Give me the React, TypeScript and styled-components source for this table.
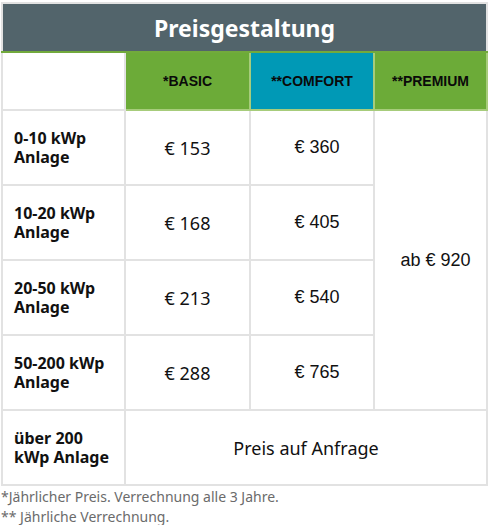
import React from "react";
import styled, { createGlobalStyle } from "styled-components";

const GlobalStyle = createGlobalStyle`
    body {
        margin: 0;
        background: #ffffff;
        font-family: "Noto Sans", "Open Sans", sans-serif;
        color: #111;
    }
`;

const StyledPricing = styled.div`
    padding: 2px 4px 0 1px;
    width: 485px;
`;

const Table = styled.table`
    width: 485px;
    border-collapse: collapse;
    table-layout: fixed;
    border: 2px solid #e2e2e2;
`;

const TitleCell = styled.th`
    height: 47px;
    background: #52646b;
    color: #fff;
    font-size: 23px;
    font-weight: 700;
    text-align: center;
    border-bottom: 2px solid #72aa3c;
    padding: 0;
`;

const HeadCell = styled.th<{ $bg?: string }>`
    height: 56px;
    background: ${(p) => p.$bg || "#fff"};
    border: 2px solid ${(p) => (p.$bg ? "#a7cc7b" : "#e2e2e2")};
    border-top: none;
    font-family: "Liberation Sans", Arial, sans-serif;
    font-size: 14px;
    font-weight: 700;
    color: #0a0a0a;
    text-align: center;
    padding: 0;
`;

const LabelCell = styled.td`
    height: 73px;
    border: 2px solid #e2e2e2;
    padding: 0 8px 0 11px;
    font-size: 16px;
    font-weight: 700;
    line-height: 19px;
    vertical-align: middle;
`;

const PriceCell = styled.td<{ $alt?: boolean }>`
    border: 2px solid #e2e2e2;
    font-family: ${(p) =>
        p.$alt ? `"Liberation Sans", Arial, sans-serif` : `"Noto Sans", sans-serif`};
    font-size: 18px;
    text-align: center;
    vertical-align: middle;
    padding: 0 0 ${(p) => (p.$alt ? "0 10px" : "0")};
`;

const Footnote = styled.p`
    margin: 0;
    font-size: 14px;
    line-height: 20px;
    color: #6b6b6b;
`;

const Footnotes = styled.div`
    padding-top: 1px;
`;

const rows = [
    { label: ["0-10 kWp", "Anlage"], basic: "€ 153", comfort: "€ 360" },
    { label: ["10-20 kWp", "Anlage"], basic: "€ 168", comfort: "€ 405" },
    { label: ["20-50 kWp", "Anlage"], basic: "€ 213", comfort: "€ 540" },
    { label: ["50-200 kWp", "Anlage"], basic: "€ 288", comfort: "€ 765" },
];

export default function App() {
    return (
        <StyledPricing>
            <GlobalStyle />
            <Table>
                <colgroup>
                    <col style={{ width: 123 }} />
                    <col style={{ width: 125 }} />
                    <col style={{ width: 124 }} />
                    <col style={{ width: 113 }} />
                </colgroup>
                <thead>
                    <tr>
                        <TitleCell colSpan={4}>Preisgestaltung</TitleCell>
                    </tr>
                    <tr>
                        <HeadCell />
                        <HeadCell $bg="#6cab38">*BASIC</HeadCell>
                        <HeadCell $bg="#0099b6">**COMFORT</HeadCell>
                        <HeadCell $bg="#6cab38">**PREMIUM</HeadCell>
                    </tr>
                </thead>
                <tbody>
                    {rows.map((r, i) => (
                        <tr key={r.basic}>
                            <LabelCell>
                                {r.label[0]}
                                <br />
                                {r.label[1]}
                            </LabelCell>
                            <PriceCell>{r.basic}</PriceCell>
                            <PriceCell $alt>{r.comfort}</PriceCell>
                            {i === 0 && (
                                <PriceCell rowSpan={4} $alt>
                                    ab € 920
                                </PriceCell>
                            )}
                        </tr>
                    ))}
                    <tr>
                        <LabelCell>
                            über 200
                            <br />
                            kWp Anlage
                        </LabelCell>
                        <PriceCell colSpan={3}>Preis auf Anfrage</PriceCell>
                    </tr>
                </tbody>
            </Table>
            <Footnotes>
                <Footnote>*Jährlicher Preis. Verrechnung alle 3 Jahre.</Footnote>
                <Footnote>** Jährliche Verrechnung.</Footnote>
            </Footnotes>
        </StyledPricing>
    );
}
